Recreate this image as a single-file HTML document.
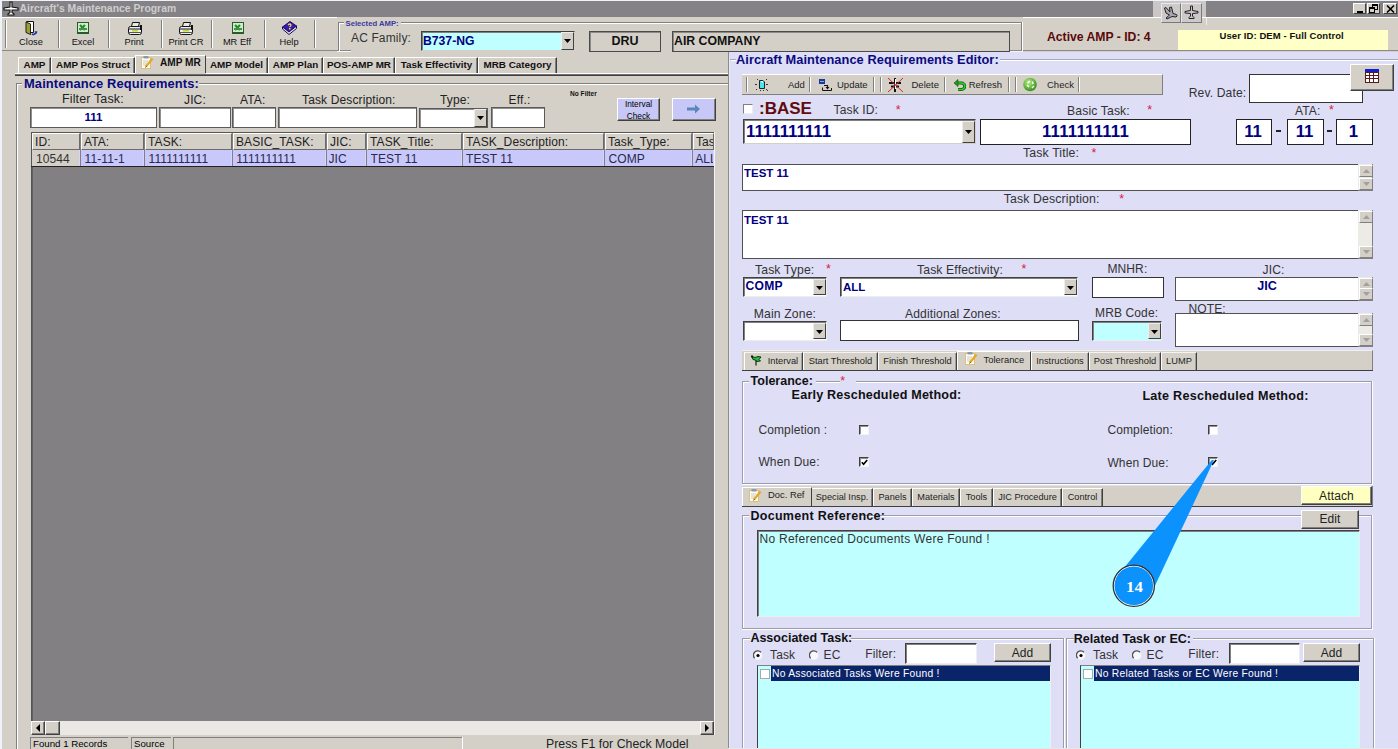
<!DOCTYPE html>
<html><head><meta charset="utf-8"><style>
html,body{margin:0;padding:0;}
body{width:1398px;height:749px;overflow:hidden;position:relative;background:#d4d0c8;font-family:"Liberation Sans",sans-serif;}
.a{position:absolute;}
.t{position:absolute;white-space:pre;line-height:1.149;}
</style></head><body>
<div class="a" style="left:0px;top:0px;width:1398px;height:749px;background:#d4d0c8"></div>
<div class="a" style="left:0px;top:0px;width:2px;height:749px;background:#eef3fb"></div>
<div class="a" style="left:0px;top:0px;width:1398px;height:1px;background:#eef3fb"></div>
<div class="a" style="left:2px;top:1px;width:1151px;height:16px;background:#848284"></div>
<div class="a" style="left:1206px;top:1px;width:192px;height:16px;background:#848284"></div>
<div class="t" style="left:19.5px;top:3.42px;font-size:10.4px;font-weight:bold;color:#cfcdcf;">Aircraft's Maintenance Program</div>
<svg class="a" style="left:3px;top:1px" width="16" height="15" viewBox="0 0 16 15"><path d="M7 1 H9 V6 L15 7 V9 L9 9 V11.5 L11 13 V14 H5 V13 L7 11.5 V9 L1 9 V7 L7 6Z" fill="#fff" stroke="#111" stroke-width="1.1"/></svg>
<div class="a" style="left:1353px;top:3px;width:13px;height:11px;background:#d4d0c8;box-sizing:border-box;border:1px solid;border-color:#fff #404040 #404040 #fff"></div>
<div class="a" style="left:1367px;top:3px;width:13px;height:11px;background:#d4d0c8;box-sizing:border-box;border:1px solid;border-color:#fff #404040 #404040 #fff"></div>
<div class="a" style="left:1383px;top:3px;width:14px;height:11px;background:#d4d0c8;box-sizing:border-box;border:1px solid;border-color:#fff #404040 #404040 #fff"></div>
<div class="a" style="left:1357px;top:11px;width:6px;height:2px;background:#000"></div>
<svg class="a" style="left:1369px;top:4px" width="10" height="9"><rect x="3.5" y="0.5" width="5" height="5" fill="none" stroke="#000"/><rect x="3" y="0" width="6" height="2" fill="#000"/><rect x="0.5" y="3.5" width="5" height="5" fill="#d4d0c8" stroke="#000"/><rect x="0" y="3" width="6" height="2" fill="#000"/></svg>
<svg class="a" style="left:1386px;top:5px" width="9" height="8"><path d="M1 0.5 L8 7.5 M8 0.5 L1 7.5" stroke="#000" stroke-width="1.6"/></svg>
<div class="a" style="left:1153px;top:1px;width:53px;height:16px;background:#cbc7c7"></div>
<div class="a" style="left:1206px;top:17px;width:1px;height:8px;background:#eeeeee"></div>
<div class="a" style="left:1161px;top:3px;width:20px;height:20px;background:#cdc9c9;box-sizing:border-box;border:1px solid;border-color:#e8e8e8 #7a7a7a #7a7a7a #e8e8e8"></div>
<div class="a" style="left:1181px;top:3px;width:21px;height:20px;background:#cdc9c9;box-sizing:border-box;border:1px solid;border-color:#e8e8e8 #7a7a7a #7a7a7a #e8e8e8"></div>
<svg class="a" style="left:1163px;top:6px" width="16" height="14"><path d="M1.5 2 L3 1.5 L7 6 L6.5 1.5 L8.5 1 L10 7.5 L13.5 8.5 Q15 10 13 11 L9 10.5 L4 13 L3 12 L6.5 9 L3 7Z" fill="#aaa6b0" stroke="#222" stroke-width="1"/></svg>
<svg class="a" style="left:1184px;top:5px" width="15" height="15"><path d="M6.5 1 H8.5 V5.5 L14 6.5 V8 L8.5 8.5 V11 L10 12.5 V13.5 H5 V12.5 L6.5 11 V8.5 L1 8 V6.5 L6.5 5.5Z" fill="#c8c4c8" stroke="#222" stroke-width="1"/></svg>
<div class="a" style="left:2px;top:17px;width:335px;height:1px;background:#fff"></div>
<div class="a" style="left:1023px;top:17px;width:130px;height:1px;background:#fff"></div>
<div class="a" style="left:1153px;top:17px;width:8px;height:1px;background:#fff"></div>
<div class="a" style="left:1202px;top:17px;width:196px;height:1px;background:#fff"></div>
<div class="a" style="left:2px;top:50px;width:349px;height:1px;background:#8a8a8a"></div>
<div class="a" style="left:337px;top:51px;width:14px;height:1px;background:#f6f6f6"></div>
<div class="a" style="left:1010px;top:50px;width:388px;height:1px;background:#8a8a8a"></div>
<div class="a" style="left:1010px;top:51px;width:13px;height:1px;background:#f6f6f6"></div>
<div class="a" style="left:5px;top:20px;width:1px;height:28px;background:#808080"></div>
<div class="a" style="left:6px;top:20px;width:1px;height:28px;background:#fff"></div>
<div class="a" style="left:58px;top:20px;width:1px;height:28px;background:#808080"></div>
<div class="a" style="left:59px;top:20px;width:1px;height:28px;background:#fff"></div>
<div class="a" style="left:108px;top:20px;width:1px;height:28px;background:#808080"></div>
<div class="a" style="left:109px;top:20px;width:1px;height:28px;background:#fff"></div>
<div class="a" style="left:161px;top:20px;width:1px;height:28px;background:#808080"></div>
<div class="a" style="left:162px;top:20px;width:1px;height:28px;background:#fff"></div>
<div class="a" style="left:211px;top:20px;width:1px;height:28px;background:#808080"></div>
<div class="a" style="left:212px;top:20px;width:1px;height:28px;background:#fff"></div>
<div class="a" style="left:264px;top:20px;width:1px;height:28px;background:#808080"></div>
<div class="a" style="left:265px;top:20px;width:1px;height:28px;background:#fff"></div>
<div class="a" style="left:314px;top:20px;width:1px;height:28px;background:#808080"></div>
<div class="a" style="left:315px;top:20px;width:1px;height:28px;background:#fff"></div>
<div class="t" style="left:-9px;top:37.13px;font-size:9.3px;color:#111;width:80px;text-align:center;">Close</div>
<div class="t" style="left:43px;top:37.13px;font-size:9.3px;color:#111;width:80px;text-align:center;">Excel</div>
<div class="t" style="left:94px;top:37.13px;font-size:9.3px;color:#111;width:80px;text-align:center;">Print</div>
<div class="t" style="left:146px;top:37.13px;font-size:9.3px;color:#111;width:80px;text-align:center;">Print CR</div>
<div class="t" style="left:197px;top:37.13px;font-size:9.3px;color:#111;width:80px;text-align:center;">MR Eff</div>
<div class="t" style="left:249px;top:37.13px;font-size:9.3px;color:#111;width:80px;text-align:center;">Help</div>
<svg class="a" style="left:25px;top:20px" width="14" height="17"><path d="M1.5 1.5 H8.5 V12.5 H1.5Z" fill="#fff" stroke="#111"/><path d="M1 2 L5.5 4 V14.5 L1 12.5Z" fill="#9aa02a" stroke="#222" stroke-width="1"/><path d="M7 14 Q9 15.5 11 12.5" stroke="#2030b0" stroke-width="1.6" fill="none"/><path d="M9.5 11 L12.5 11.5 L11.5 14Z" fill="#2030b0"/></svg>
<svg class="a" style="left:77px;top:22px" width="12" height="12"><rect x="0" y="0" width="12" height="12" fill="#2a5a2a"/><rect x="1" y="1" width="10" height="9" fill="#d0ecd0"/><path d="M3 3 L8 8 M8 3 L3 8" stroke="#2e8a2e" stroke-width="2.2"/><rect x="2" y="6" width="8" height="2" fill="#3a9a3a"/></svg>
<svg class="a" style="left:232px;top:22px" width="12" height="12"><rect x="0" y="0" width="12" height="12" fill="#2a5a2a"/><rect x="1" y="1" width="10" height="9" fill="#d0ecd0"/><path d="M3 3 L8 8 M8 3 L3 8" stroke="#2e8a2e" stroke-width="2.2"/><rect x="2" y="6" width="8" height="2" fill="#3a9a3a"/></svg>
<svg class="a" style="left:128px;top:22px" width="15" height="13"><path d="M4.5 0.5 H11.5 L10.5 4.5 H3.5Z" fill="#e8e8e8" stroke="#111"/><rect x="0.5" y="4.5" width="13" height="8" rx="2" fill="#f0f0f0" stroke="#111"/><rect x="1" y="6.5" width="12" height="1" fill="#111"/><rect x="4" y="8" width="6" height="1.5" fill="#b8d820"/><rect x="1" y="10" width="12" height="1" fill="#555"/><rect x="12" y="3" width="2" height="5" fill="#111"/></svg>
<svg class="a" style="left:179px;top:22px" width="15" height="13"><path d="M4.5 0.5 H11.5 L10.5 4.5 H3.5Z" fill="#e8e8e8" stroke="#111"/><rect x="0.5" y="4.5" width="13" height="8" rx="2" fill="#f0f0f0" stroke="#111"/><rect x="1" y="6.5" width="12" height="1" fill="#111"/><rect x="4" y="8" width="6" height="1.5" fill="#b8d820"/><rect x="1" y="10" width="12" height="1" fill="#555"/><rect x="12" y="3" width="2" height="5" fill="#111"/></svg>
<svg class="a" style="left:282px;top:21px" width="15" height="14"><path d="M0.5 6 L8 0.5 L14.5 5 L7 11Z" fill="#3a1ab0" stroke="#1a0a60"/><path d="M0.5 6 V8 L7 13.5 L14.5 7.5 V5 L7 11Z" fill="#e8e8f0" stroke="#1a0a60"/><path d="M6 4 Q8 2 9 4 Q9 5 7.5 6" stroke="#f0d840" stroke-width="1.3" fill="none"/><rect x="7" y="7" width="1.5" height="1.5" fill="#f0d840"/></svg>
<div class="a" style="left:338px;top:22px;width:6px;height:1px;background:#808080"></div>
<div class="a" style="left:338px;top:23px;width:6px;height:1px;background:#fff"></div>
<div class="a" style="left:401px;top:22px;width:621px;height:1px;background:#808080"></div>
<div class="a" style="left:401px;top:23px;width:621px;height:1px;background:#fff"></div>
<div class="a" style="left:338px;top:22px;width:1px;height:29px;background:#808080"></div>
<div class="a" style="left:339px;top:23px;width:1px;height:28px;background:#fff"></div>
<div class="a" style="left:1021px;top:22px;width:1px;height:29px;background:#808080"></div>
<div class="a" style="left:1022px;top:22px;width:1px;height:29px;background:#fff"></div>
<div class="t" style="left:345.5px;top:19.61px;font-size:7.7px;font-weight:bold;color:#3a3aa0;">Selected AMP:</div>
<div class="t" style="left:351px;top:31.75px;font-size:12px;color:#333;letter-spacing:0.13px;">AC Family:</div>
<div class="a" style="left:421px;top:31px;width:154px;height:20px;background:#c0ffff;box-sizing:border-box;border:1px solid;border-color:#404040 #d4d0c8 #d4d0c8 #404040;box-shadow:inset 1px 1px 0 #808080"></div>
<div class="a" style="left:561px;top:32px;width:13px;height:18px;background:#d4d0c8;box-sizing:border-box;border:1px solid;border-color:#eee #404040 #404040 #eee"></div>
<svg class="a" style="left:564px;top:39px" width="7" height="4"><path d="M0 0 H7 L3.5 4Z" fill="#000"/></svg>
<div class="t" style="left:423px;top:34.26px;font-size:12.2px;font-weight:bold;color:#000080;">B737-NG</div>
<div class="a" style="left:589px;top:31px;width:72px;height:21px;background:#d4d0c8;box-sizing:border-box;border:1px solid #4a4a4a;box-shadow:inset 1px 1px 0 #8a8a8a"></div>
<div class="t" style="left:589px;top:33.99px;font-size:12.5px;font-weight:bold;color:#111;width:72px;text-align:center;">DRU</div>
<div class="a" style="left:672px;top:31px;width:338px;height:21px;background:#d4d0c8;box-sizing:border-box;border:1px solid #4a4a4a;box-shadow:inset 1px 1px 0 #8a8a8a"></div>
<div class="t" style="left:674px;top:34.17px;font-size:12.3px;font-weight:bold;color:#111;">AIR COMPANY</div>
<div class="t" style="left:1047px;top:30.46px;font-size:12.2px;font-weight:bold;color:#5a0a0a;">Active AMP - ID: 4</div>
<div class="a" style="left:1178px;top:30px;width:210px;height:20px;background:#ffffc8"></div>
<div class="t" style="left:1219.5px;top:31.45px;font-size:9.5px;font-weight:bold;color:#111;letter-spacing:0.09px">User ID: DEM - Full Control</div>
<div class="a" style="left:18px;top:57px;width:33px;height:16px;background:#d4d0c8;box-sizing:border-box;border-top:1px solid #fff;border-left:1px solid #fff;border-right:1px solid #404040;box-shadow:inset -1px 0 0 #808080"></div>
<div class="t" style="left:18px;top:59.08px;font-size:9.9px;font-weight:bold;color:#111;width:33px;text-align:center;">AMP</div>
<div class="a" style="left:51px;top:57px;width:84px;height:16px;background:#d4d0c8;box-sizing:border-box;border-top:1px solid #fff;border-left:1px solid #fff;border-right:1px solid #404040;box-shadow:inset -1px 0 0 #808080"></div>
<div class="t" style="left:51px;top:59.08px;font-size:9.9px;font-weight:bold;color:#111;width:84px;text-align:center;">AMP Pos Struct</div>
<div class="a" style="left:205px;top:57px;width:63px;height:16px;background:#d4d0c8;box-sizing:border-box;border-top:1px solid #fff;border-left:1px solid #fff;border-right:1px solid #404040;box-shadow:inset -1px 0 0 #808080"></div>
<div class="t" style="left:205px;top:59.08px;font-size:9.9px;font-weight:bold;color:#111;width:63px;text-align:center;">AMP Model</div>
<div class="a" style="left:268px;top:57px;width:55px;height:16px;background:#d4d0c8;box-sizing:border-box;border-top:1px solid #fff;border-left:1px solid #fff;border-right:1px solid #404040;box-shadow:inset -1px 0 0 #808080"></div>
<div class="t" style="left:268px;top:59.08px;font-size:9.9px;font-weight:bold;color:#111;width:55px;text-align:center;">AMP Plan</div>
<div class="a" style="left:323px;top:57px;width:72px;height:16px;background:#d4d0c8;box-sizing:border-box;border-top:1px solid #fff;border-left:1px solid #fff;border-right:1px solid #404040;box-shadow:inset -1px 0 0 #808080"></div>
<div class="t" style="left:323px;top:59.08px;font-size:9.9px;font-weight:bold;color:#111;width:72px;text-align:center;">POS-AMP MR</div>
<div class="a" style="left:395px;top:57px;width:83px;height:16px;background:#d4d0c8;box-sizing:border-box;border-top:1px solid #fff;border-left:1px solid #fff;border-right:1px solid #404040;box-shadow:inset -1px 0 0 #808080"></div>
<div class="t" style="left:395px;top:59.08px;font-size:9.9px;font-weight:bold;color:#111;width:83px;text-align:center;">Task Effectivity</div>
<div class="a" style="left:478px;top:57px;width:79px;height:16px;background:#d4d0c8;box-sizing:border-box;border-top:1px solid #fff;border-left:1px solid #fff;border-right:1px solid #404040;box-shadow:inset -1px 0 0 #808080"></div>
<div class="t" style="left:478px;top:59.08px;font-size:9.9px;font-weight:bold;color:#111;width:79px;text-align:center;">MRB Category</div>
<div class="a" style="left:135px;top:55px;width:71px;height:18px;background:#d4d0c8;box-sizing:border-box;border-top:1px solid #fff;border-left:1px solid #fff;border-right:1px solid #404040"></div>
<div class="t" style="left:160px;top:57.00px;font-size:10.1px;font-weight:bold;color:#111;">AMP MR</div>
<svg class="a" style="left:141px;top:56px" width="13" height="13"><rect x="0.5" y="1.5" width="9" height="11" fill="#fffef0" stroke="#d8c080"/><rect x="2.5" y="0" width="5" height="2.5" fill="#8a9aa8"/><path d="M2 5h5M2 7h4M2 9h3" stroke="#c8c8c8"/><path d="M5 10.5 L11.5 2.5" stroke="#e8a828" stroke-width="2.4"/><path d="M4.5 11.5 L5.5 10" stroke="#604010" stroke-width="1"/></svg>
<div class="a" style="left:15px;top:73px;width:120px;height:1px;background:#fff"></div>
<div class="a" style="left:206px;top:73px;width:522px;height:1px;background:#fff"></div>
<div class="a" style="left:15px;top:74px;width:713px;height:1px;background:#707070"></div>
<div class="a" style="left:15px;top:75px;width:713px;height:1px;background:#404040"></div>
<div class="a" style="left:16px;top:83px;width:1px;height:666px;background:#808080"></div>
<div class="a" style="left:17px;top:84px;width:1px;height:665px;background:#fff"></div>
<div class="a" style="left:16px;top:83px;width:6px;height:1px;background:#808080"></div>
<div class="a" style="left:17px;top:84px;width:5px;height:1px;background:#fff"></div>
<div class="a" style="left:199px;top:83px;width:529px;height:1px;background:#808080"></div>
<div class="a" style="left:199px;top:84px;width:529px;height:1px;background:#fff"></div>
<div class="a" style="left:714px;top:132px;width:1px;height:603px;background:#f4f4f4"></div>
<div class="t" style="left:24px;top:77.12px;font-size:12.9px;font-weight:bold;color:#0a0a80;letter-spacing:0.12px">Maintenance Requirements:</div>
<div class="t" style="left:62px;top:91.79px;font-size:12.5px;color:#222;letter-spacing:0.13px;">Filter Task:</div>
<div class="t" style="left:184px;top:93.75px;font-size:12px;color:#222;letter-spacing:0.13px;">JIC:</div>
<div class="t" style="left:240px;top:93.75px;font-size:12px;color:#222;letter-spacing:0.13px;">ATA:</div>
<div class="t" style="left:302px;top:93.75px;font-size:12px;color:#222;letter-spacing:0.13px;">Task Description:</div>
<div class="t" style="left:440px;top:93.75px;font-size:12px;color:#222;letter-spacing:0.13px;">Type:</div>
<div class="t" style="left:508.6px;top:93.75px;font-size:12px;color:#222;letter-spacing:0.13px;">Eff.:</div>
<div class="t" style="left:570px;top:90.42px;font-size:6.6px;font-weight:bold;color:#111;">No Filter</div>
<div class="a" style="left:30px;top:107px;width:127px;height:21px;background:#fff;box-sizing:border-box;border:1px solid #5a5a5a;box-shadow:inset 1px 1px 0 #909090"></div>
<div class="t" style="left:30px;top:110.61px;font-size:11.5px;font-weight:bold;color:#000080;width:127px;text-align:center;">111</div>
<div class="a" style="left:159px;top:107px;width:72px;height:21px;background:#fff;box-sizing:border-box;border:1px solid #5a5a5a;box-shadow:inset 1px 1px 0 #909090"></div>
<div class="a" style="left:232px;top:107px;width:44px;height:21px;background:#fff;box-sizing:border-box;border:1px solid #5a5a5a;box-shadow:inset 1px 1px 0 #909090"></div>
<div class="a" style="left:278px;top:107px;width:139px;height:21px;background:#fff;box-sizing:border-box;border:1px solid #5a5a5a;box-shadow:inset 1px 1px 0 #909090"></div>
<div class="a" style="left:419px;top:108px;width:69px;height:20px;background:#fff;box-sizing:border-box;border:1px solid #5a5a5a;box-shadow:inset 1px 1px 0 #909090"></div>
<div class="a" style="left:474px;top:109px;width:13px;height:18px;background:#d4d0c8;box-sizing:border-box;border:1px solid;border-color:#eee #404040 #404040 #eee"></div>
<svg class="a" style="left:477px;top:116px" width="7" height="4"><path d="M0 0 H7 L3.5 4Z" fill="#000"/></svg>
<div class="a" style="left:491px;top:107px;width:54px;height:21px;background:#fff;box-sizing:border-box;border:1px solid #5a5a5a;box-shadow:inset 1px 1px 0 #909090"></div>
<div class="a" style="left:617px;top:98px;width:43px;height:23px;background:#c8c8f8;box-sizing:border-box;border:1px solid;border-color:#fff #404040 #404040 #fff;box-shadow:inset -1px -1px 0 #808080"></div>
<div class="t" style="left:617px;top:100.46px;font-size:8.3px;color:#000;width:43px;text-align:center;">Interval</div>
<div class="t" style="left:617px;top:112.36px;font-size:8.3px;color:#000;width:43px;text-align:center;">Check</div>
<div class="a" style="left:672px;top:98px;width:44px;height:23px;background:#c8c8f8;box-sizing:border-box;border:1px solid;border-color:#fff #404040 #404040 #fff;box-shadow:inset -1px -1px 0 #808080"></div>
<svg class="a" style="left:687px;top:104px" width="14" height="10"><path d="M0 3.5 H8 V0.5 L13 5 L8 9.5 V6.5 H0Z" fill="#5a86b8"/></svg>
<div class="a" style="left:31px;top:132px;width:683px;height:590px;background:#838083"></div>
<div class="a" style="left:31px;top:132px;width:683px;height:1px;background:#555"></div>
<div class="a" style="left:31px;top:132px;width:1px;height:603px;background:#555"></div>
<div class="a" style="left:32px;top:166px;width:1px;height:555px;background:#606060"></div>
<div class="a" style="left:32px;top:133px;width:48px;height:17px;background:#d4d0c8;box-sizing:border-box;border:1px solid;border-color:#fff #6a6a6a #6a6a6a #fff"></div>
<div class="a" style="left:32px;top:150px;width:48px;height:16px;background:#d4d0c8;box-sizing:border-box;border-right:1px solid #d4d4fc;"></div>
<div class="t" style="left:35px;top:136.15px;font-size:12px;color:#222;width:44px;overflow:hidden;letter-spacing:0.1px;">ID:</div>
<div class="t" style="left:36px;top:152.95px;font-size:12px;color:#333;width:43px;overflow:hidden;letter-spacing:0.1px;">10544</div>
<div class="a" style="left:81px;top:133px;width:63px;height:17px;background:#d4d0c8;box-sizing:border-box;border:1px solid;border-color:#fff #6a6a6a #6a6a6a #fff"></div>
<div class="a" style="left:81px;top:150px;width:63px;height:16px;background:#c8c8fa;box-sizing:border-box;border-right:1px solid #d4d4fc;"></div>
<div class="t" style="left:84px;top:136.15px;font-size:12px;color:#222;width:59px;overflow:hidden;letter-spacing:0.1px;">ATA:</div>
<div class="t" style="left:84.5px;top:152.95px;font-size:12px;color:#282850;width:58.5px;overflow:hidden;letter-spacing:0.1px;">11-11-1</div>
<div class="a" style="left:145px;top:133px;width:87px;height:17px;background:#d4d0c8;box-sizing:border-box;border:1px solid;border-color:#fff #6a6a6a #6a6a6a #fff"></div>
<div class="a" style="left:145px;top:150px;width:87px;height:16px;background:#c8c8fa;box-sizing:border-box;border-right:1px solid #d4d4fc;"></div>
<div class="t" style="left:148px;top:136.15px;font-size:12px;color:#222;width:83px;overflow:hidden;letter-spacing:0.1px;">TASK:</div>
<div class="t" style="left:148.5px;top:152.95px;font-size:12px;color:#282850;width:82.5px;overflow:hidden;letter-spacing:0.1px;">1111111111</div>
<div class="a" style="left:233px;top:133px;width:93px;height:17px;background:#d4d0c8;box-sizing:border-box;border:1px solid;border-color:#fff #6a6a6a #6a6a6a #fff"></div>
<div class="a" style="left:233px;top:150px;width:93px;height:16px;background:#c8c8fa;box-sizing:border-box;border-right:1px solid #d4d4fc;"></div>
<div class="t" style="left:236px;top:136.15px;font-size:12px;color:#222;width:89px;overflow:hidden;letter-spacing:0.1px;">BASIC_TASK:</div>
<div class="t" style="left:236.2px;top:152.95px;font-size:12px;color:#282850;width:88.8px;overflow:hidden;letter-spacing:0.1px;">1111111111</div>
<div class="a" style="left:327px;top:133px;width:39px;height:17px;background:#d4d0c8;box-sizing:border-box;border:1px solid;border-color:#fff #6a6a6a #6a6a6a #fff"></div>
<div class="a" style="left:327px;top:150px;width:39px;height:16px;background:#c8c8fa;box-sizing:border-box;border-right:1px solid #d4d4fc;"></div>
<div class="t" style="left:330px;top:136.15px;font-size:12px;color:#222;width:35px;overflow:hidden;letter-spacing:0.1px;">JIC:</div>
<div class="t" style="left:328.5px;top:152.95px;font-size:12px;color:#282850;width:36.5px;overflow:hidden;letter-spacing:0.1px;">JIC</div>
<div class="a" style="left:367px;top:133px;width:95px;height:17px;background:#d4d0c8;box-sizing:border-box;border:1px solid;border-color:#fff #6a6a6a #6a6a6a #fff"></div>
<div class="a" style="left:367px;top:150px;width:95px;height:16px;background:#c8c8fa;box-sizing:border-box;border-right:1px solid #d4d4fc;"></div>
<div class="t" style="left:370px;top:136.15px;font-size:12px;color:#222;width:91px;overflow:hidden;letter-spacing:0.1px;">TASK_Title:</div>
<div class="t" style="left:370.5px;top:152.95px;font-size:12px;color:#282850;width:90.5px;overflow:hidden;letter-spacing:0.1px;">TEST 11</div>
<div class="a" style="left:463px;top:133px;width:141px;height:17px;background:#d4d0c8;box-sizing:border-box;border:1px solid;border-color:#fff #6a6a6a #6a6a6a #fff"></div>
<div class="a" style="left:463px;top:150px;width:141px;height:16px;background:#c8c8fa;box-sizing:border-box;border-right:1px solid #d4d4fc;"></div>
<div class="t" style="left:466px;top:136.15px;font-size:12px;color:#222;width:137px;overflow:hidden;letter-spacing:0.1px;">TASK_Description:</div>
<div class="t" style="left:466px;top:152.95px;font-size:12px;color:#282850;width:137px;overflow:hidden;letter-spacing:0.1px;">TEST 11</div>
<div class="a" style="left:605px;top:133px;width:87px;height:17px;background:#d4d0c8;box-sizing:border-box;border:1px solid;border-color:#fff #6a6a6a #6a6a6a #fff"></div>
<div class="a" style="left:605px;top:150px;width:87px;height:16px;background:#c8c8fa;box-sizing:border-box;border-right:1px solid #d4d4fc;"></div>
<div class="t" style="left:608px;top:136.15px;font-size:12px;color:#222;width:83px;overflow:hidden;letter-spacing:0.1px;">Task_Type:</div>
<div class="t" style="left:608.5px;top:152.95px;font-size:12px;color:#282850;width:82.5px;overflow:hidden;letter-spacing:0.1px;">COMP</div>
<div class="a" style="left:693px;top:133px;width:21px;height:17px;background:#d4d0c8;box-sizing:border-box;border:1px solid;border-color:#fff #6a6a6a #6a6a6a #fff"></div>
<div class="a" style="left:693px;top:150px;width:21px;height:16px;background:#c8c8fa;box-sizing:border-box;border-right:1px solid #d4d4fc;"></div>
<div class="t" style="left:696px;top:136.15px;font-size:12px;color:#222;width:17px;overflow:hidden;letter-spacing:0.1px;">Task_Effectivity:</div>
<div class="t" style="left:695.2px;top:152.95px;font-size:12px;color:#282850;width:17.8px;overflow:hidden;letter-spacing:0.1px;">ALL</div>
<div class="a" style="left:31px;top:166px;width:683px;height:1px;background:#222"></div>
<div class="a" style="left:31px;top:721px;width:683px;height:14px;background:#eae8e4"></div>
<div class="a" style="left:31px;top:721px;width:14px;height:14px;background:#d4d0c8;box-sizing:border-box;border:1px solid;border-color:#fff #404040 #404040 #fff;box-shadow:inset -1px -1px 0 #808080"></div>
<div class="a" style="left:700px;top:721px;width:14px;height:14px;background:#d4d0c8;box-sizing:border-box;border:1px solid;border-color:#fff #404040 #404040 #fff;box-shadow:inset -1px -1px 0 #808080"></div>
<svg class="a" style="left:36px;top:724px" width="4" height="8"><path d="M4 0 V8 L0 4Z" fill="#000"/></svg>
<svg class="a" style="left:705px;top:724px" width="4" height="8"><path d="M0 0 V8 L4 4Z" fill="#000"/></svg>
<div class="a" style="left:45px;top:721px;width:15px;height:14px;background:#d4d0c8;box-sizing:border-box;border:1px solid;border-color:#fff #404040 #404040 #fff;box-shadow:inset -1px -1px 0 #808080"></div>
<div class="a" style="left:30px;top:737px;width:1px;height:12px;background:#808080"></div>
<div class="a" style="left:30px;top:737px;width:98px;height:1px;background:#808080"></div>
<div class="a" style="left:131px;top:737px;width:1px;height:12px;background:#808080"></div>
<div class="a" style="left:131px;top:737px;width:40px;height:1px;background:#808080"></div>
<div class="a" style="left:173px;top:737px;width:1px;height:12px;background:#808080"></div>
<div class="a" style="left:173px;top:737px;width:290px;height:1px;background:#808080"></div>
<div class="a" style="left:462px;top:737px;width:1px;height:12px;background:#fff"></div>
<div class="t" style="left:33px;top:738.07px;font-size:9.7px;color:#000;">Found 1 Records</div>
<div class="t" style="left:134px;top:738.47px;font-size:9.7px;color:#000;">Source</div>
<div class="t" style="left:546px;top:737.07px;font-size:12.3px;color:#222;letter-spacing:0.02px">Press F1 for Check Model</div>
<div class="a" style="left:728px;top:52px;width:670px;height:697px;background:#dedef6"></div>
<div class="a" style="left:729px;top:59px;width:7px;height:1px;background:#a8a8b8"></div>
<div class="a" style="left:1000px;top:59px;width:398px;height:1px;background:#a8a8b8"></div>
<div class="a" style="left:731px;top:60px;width:5px;height:1px;background:#fff"></div>
<div class="a" style="left:1000px;top:60px;width:398px;height:1px;background:#fff"></div>
<div class="a" style="left:728px;top:52px;width:1px;height:697px;background:#8c8c8c"></div>
<div class="a" style="left:729px;top:59px;width:1px;height:690px;background:#eaeaf2"></div>
<div class="t" style="left:736px;top:52.51px;font-size:12.8px;font-weight:bold;color:#0a0a80;letter-spacing:0.06px">Aircraft Maintenance Requirements Editor:</div>
<div class="a" style="left:742px;top:74px;width:421px;height:21px;background:#d4d0c8;box-sizing:border-box;border-bottom:1px solid #808080;border-right:1px solid #808080;border-top:1px solid #fff"></div>
<div class="a" style="left:746px;top:77px;width:1px;height:15px;background:#808080"></div>
<div class="a" style="left:747px;top:77px;width:1px;height:15px;background:#fff"></div>
<div class="a" style="left:809px;top:77px;width:1px;height:15px;background:#808080"></div>
<div class="a" style="left:810px;top:77px;width:1px;height:15px;background:#fff"></div>
<div class="a" style="left:873px;top:77px;width:1px;height:15px;background:#808080"></div>
<div class="a" style="left:874px;top:77px;width:1px;height:15px;background:#fff"></div>
<div class="a" style="left:880px;top:77px;width:1px;height:15px;background:#808080"></div>
<div class="a" style="left:881px;top:77px;width:1px;height:15px;background:#fff"></div>
<div class="a" style="left:944px;top:77px;width:1px;height:15px;background:#808080"></div>
<div class="a" style="left:945px;top:77px;width:1px;height:15px;background:#fff"></div>
<div class="a" style="left:1008px;top:77px;width:1px;height:15px;background:#808080"></div>
<div class="a" style="left:1009px;top:77px;width:1px;height:15px;background:#fff"></div>
<div class="a" style="left:1015px;top:77px;width:1px;height:15px;background:#808080"></div>
<div class="a" style="left:1016px;top:77px;width:1px;height:15px;background:#fff"></div>
<div class="a" style="left:1078px;top:77px;width:1px;height:15px;background:#808080"></div>
<div class="a" style="left:1079px;top:77px;width:1px;height:15px;background:#fff"></div>
<div class="t" style="left:788px;top:80.05px;font-size:9.5px;color:#222;">Add</div>
<div class="t" style="left:837px;top:80.05px;font-size:9.5px;color:#222;">Update</div>
<div class="t" style="left:911.5px;top:80.05px;font-size:9.5px;color:#222;">Delete</div>
<div class="t" style="left:968.7px;top:80.05px;font-size:9.5px;color:#222;">Refresh</div>
<div class="t" style="left:1047px;top:80.05px;font-size:9.5px;color:#222;">Check</div>
<svg class="a" style="left:755px;top:79px" width="13" height="12"><path d="M4.5 1.5 H8 L9.5 3 V9.5 H4.5Z" fill="#40e8f0" stroke="#222"/><path d="M6 2.5 H7.5 V4" stroke="#fff" fill="none"/><g fill="#333"><rect x="2" y="0" width="1" height="1"/><rect x="11" y="0" width="1" height="1"/><rect x="0" y="5" width="2" height="1"/><rect x="11" y="5" width="2" height="1"/><rect x="1" y="10" width="1" height="1"/><rect x="5" y="11" width="1" height="1"/><rect x="8" y="11" width="1" height="1"/><rect x="11" y="10" width="1" height="1"/><rect x="12" y="11" width="1" height="1"/></g></svg>
<svg class="a" style="left:819px;top:79px" width="13" height="12"><rect x="0" y="0" width="6" height="5" fill="#1a3a9a"/><rect x="1" y="2" width="4" height="1" fill="#8ad"/><path d="M5 6.5 H8.5 V9" stroke="#111" stroke-width="1.2" fill="none"/><path d="M6.5 8 L8.5 10.5 L10.5 8Z" fill="#111"/><path d="M3.5 8.5 V11.5 H12.5 V9" stroke="#111" fill="none"/></svg>
<svg class="a" style="left:886px;top:76px" width="20" height="18"><path d="M9 2 V15 M3 7 H15 M5 10.5 H13 M8 15 H10" stroke="#111" stroke-width="2"/><path d="M9.5 3 V13" stroke="#fff" stroke-width="1"/><path d="M2 2 L17 16 M17 2 L2 16" stroke="#d02828" stroke-width="1"/></svg>
<svg class="a" style="left:954px;top:79px" width="12" height="12"><path d="M3 4 H7.5 A3.2 3.2 0 0 1 7.5 10.5 H4" fill="none" stroke="#0a5a0a" stroke-width="3"/><path d="M3 4 H7.5 A3.2 3.2 0 0 1 7.5 10.5 H4" fill="none" stroke="#30d030" stroke-width="1.5"/><path d="M0 4 L4 0.5 V7.5Z" fill="#20a020" stroke="#0a4a0a" stroke-width="0.6"/></svg>
<svg class="a" style="left:1023px;top:77px" width="14" height="15"><defs><radialGradient id="gg" cx="0.4" cy="0.35" r="0.7"><stop offset="0" stop-color="#b8f080"/><stop offset="1" stop-color="#2a8a1a"/></radialGradient></defs><circle cx="7" cy="7.5" r="6.8" fill="url(#gg)"/><path d="M4 8 L6 10 M4.5 6 L7 4 M9 11 L11 9 M9.5 4.5 L10 7" stroke="#fff" stroke-width="1.4"/></svg>
<div class="t" style="left:1188.7px;top:86.66px;font-size:12.1px;color:#333;letter-spacing:0.13px;">Rev. Date:</div>
<div class="a" style="left:1249px;top:74px;width:114px;height:29px;background:#fff;box-sizing:border-box;border:1px solid #333"></div>
<div class="a" style="left:1350px;top:64px;width:44px;height:27px;background:#d4d0c8;box-sizing:border-box;border:1px solid;border-color:#fff #404040 #404040 #fff;box-shadow:inset -1px -1px 0 #808080"></div>
<svg class="a" style="left:1365px;top:69px" width="14" height="14"><rect x="0" y="0" width="14" height="14" fill="#5a1a1a"/><rect x="0" y="0" width="14" height="3" fill="#1020d0"/><g fill="#fff"><rect x="1" y="4" width="3" height="2"/><rect x="5" y="4" width="3" height="2"/><rect x="9" y="4" width="4" height="2"/><rect x="1" y="7" width="3" height="2"/><rect x="5" y="7" width="3" height="2"/><rect x="9" y="7" width="4" height="2"/><rect x="1" y="10" width="3" height="3"/><rect x="5" y="10" width="3" height="3"/><rect x="9" y="10" width="4" height="3"/></g></svg>
<div class="a" style="left:743px;top:104px;width:10px;height:10px;background:#fff;box-sizing:border-box;border:1px solid;border-color:#808080 #eee #eee #808080"></div>
<div class="t" style="left:759px;top:99.34px;font-size:17px;font-weight:bold;color:#600c0c;">:BASE</div>
<div class="t" style="left:833.6px;top:104.05px;font-size:12px;color:#333;letter-spacing:0.13px;">Task ID:</div>
<div class="t" style="left:895.8000000000001px;top:103.29px;font-size:12.5px;color:#d82038;letter-spacing:0.13px;">*</div>
<div class="t" style="left:1067px;top:103.86px;font-size:12.2px;color:#333;letter-spacing:0.13px;">Basic Task:</div>
<div class="t" style="left:1147.2px;top:103.09px;font-size:12.5px;color:#d82038;letter-spacing:0.13px;">*</div>
<div class="t" style="left:1295px;top:105.35px;font-size:12px;color:#333;letter-spacing:0.13px;">ATA:</div>
<div class="t" style="left:1329.0px;top:103.49px;font-size:12.5px;color:#d82038;letter-spacing:0.13px;">*</div>
<div class="a" style="left:743px;top:119px;width:233px;height:25px;background:#fff;box-sizing:border-box;border:1px solid;border-color:#404040 #d4d0c8 #d4d0c8 #404040;box-shadow:inset 1px 1px 0 #808080"></div>
<div class="a" style="left:962px;top:121px;width:13px;height:22px;background:#d4d0c8;box-sizing:border-box;border:1px solid;border-color:#eee #404040 #404040 #eee"></div>
<svg class="a" style="left:965px;top:130px" width="7" height="4"><path d="M0 0 H7 L3.5 4Z" fill="#000"/></svg>
<div class="t" style="left:746px;top:121.63px;font-size:16.8px;font-weight:bold;color:#000080;">1111111111</div>
<div class="a" style="left:980px;top:119px;width:211px;height:26px;background:#fff;box-sizing:border-box;border:1px solid #222"></div>
<div class="t" style="left:980px;top:121.63px;font-size:16.8px;font-weight:bold;color:#000080;width:211px;text-align:center;letter-spacing:0.2px">1111111111</div>
<div class="a" style="left:1236px;top:119px;width:36px;height:26px;background:#fff;box-sizing:border-box;border:1px solid #222"></div>
<div class="t" style="left:1235px;top:121.63px;font-size:16.8px;font-weight:bold;color:#000080;width:36px;text-align:center;">11</div>
<div class="a" style="left:1287px;top:119px;width:37px;height:26px;background:#fff;box-sizing:border-box;border:1px solid #222"></div>
<div class="t" style="left:1286px;top:121.63px;font-size:16.8px;font-weight:bold;color:#000080;width:37px;text-align:center;">11</div>
<div class="a" style="left:1336px;top:119px;width:37px;height:26px;background:#fff;box-sizing:border-box;border:1px solid #222"></div>
<div class="t" style="left:1335px;top:121.63px;font-size:16.8px;font-weight:bold;color:#000080;width:37px;text-align:center;">1</div>
<div class="a" style="left:1276px;top:130px;width:5px;height:2px;background:#222"></div>
<div class="a" style="left:1327px;top:130px;width:5px;height:2px;background:#222"></div>
<div class="t" style="left:1023px;top:146.27px;font-size:12.3px;color:#333;letter-spacing:0.13px;">Task Title:</div>
<div class="t" style="left:1091.4px;top:146.39px;font-size:12.5px;color:#d82038;letter-spacing:0.13px;">*</div>
<div class="a" style="left:742px;top:164px;width:617px;height:27px;background:#fff;box-sizing:border-box;border:1px solid;border-color:#505050 #505050 #505050 #505050"></div>
<div class="a" style="left:1358px;top:164px;width:15px;height:27px;background:#ecebe6;box-sizing:border-box;border-right:1px solid #808080;border-bottom:1px solid #808080"></div>
<div class="a" style="left:1359px;top:165px;width:14px;height:12px;background:#d4d0c8;box-sizing:border-box;border:1px solid;border-color:#fff #808080 #808080 #fff"></div>
<svg class="a" style="left:1363px;top:169px" width="7" height="4"><path d="M0 4 H7 L3.5 0Z" fill="#a0a0a0"/></svg>
<div class="a" style="left:1359px;top:178px;width:14px;height:12px;background:#d4d0c8;box-sizing:border-box;border:1px solid;border-color:#fff #808080 #808080 #fff"></div>
<svg class="a" style="left:1363px;top:182px" width="7" height="4"><path d="M0 0 H7 L3.5 4Z" fill="#a0a0a0"/></svg>
<div class="t" style="left:744px;top:167.31px;font-size:11.5px;font-weight:bold;color:#000080;">TEST 11</div>
<div class="t" style="left:1003.7px;top:192.27px;font-size:12.3px;color:#333;letter-spacing:0.13px;">Task Description:</div>
<div class="t" style="left:1119.2px;top:192.09px;font-size:12.5px;color:#d82038;letter-spacing:0.13px;">*</div>
<div class="a" style="left:742px;top:210px;width:617px;height:49px;background:#fff;box-sizing:border-box;border:1px solid;border-color:#505050 #505050 #505050 #505050"></div>
<div class="a" style="left:1358px;top:210px;width:15px;height:49px;background:#ecebe6;box-sizing:border-box;border-right:1px solid #808080;border-bottom:1px solid #808080"></div>
<div class="a" style="left:1359px;top:211px;width:14px;height:12px;background:#d4d0c8;box-sizing:border-box;border:1px solid;border-color:#fff #808080 #808080 #fff"></div>
<svg class="a" style="left:1363px;top:215px" width="7" height="4"><path d="M0 4 H7 L3.5 0Z" fill="#a0a0a0"/></svg>
<div class="a" style="left:1359px;top:246px;width:14px;height:12px;background:#d4d0c8;box-sizing:border-box;border:1px solid;border-color:#fff #808080 #808080 #fff"></div>
<svg class="a" style="left:1363px;top:250px" width="7" height="4"><path d="M0 0 H7 L3.5 4Z" fill="#a0a0a0"/></svg>
<div class="t" style="left:744px;top:213.71px;font-size:11.5px;font-weight:bold;color:#000080;">TEST 11</div>
<div class="t" style="left:755px;top:262.86px;font-size:12.2px;color:#333;letter-spacing:0.13px;">Task Type:</div>
<div class="t" style="left:826.0px;top:262.09px;font-size:12.5px;color:#d82038;letter-spacing:0.13px;">*</div>
<div class="a" style="left:743px;top:277px;width:84px;height:20px;background:#fff;box-sizing:border-box;border:1px solid;border-color:#404040 #eee #eee #404040;box-shadow:inset 1px 1px 0 #808080"></div>
<div class="a" style="left:813px;top:279px;width:13px;height:16px;background:#d4d0c8;box-sizing:border-box;border:1px solid;border-color:#eee #404040 #404040 #eee"></div>
<svg class="a" style="left:816px;top:286px" width="7" height="4"><path d="M0 0 H7 L3.5 4Z" fill="#000"/></svg>
<div class="t" style="left:745.4px;top:280.26px;font-size:12.1px;font-weight:bold;color:#000080;letter-spacing:0.3px">COMP</div>
<div class="t" style="left:917px;top:262.56px;font-size:12.2px;color:#333;letter-spacing:0.13px;">Task Effectivity:</div>
<div class="t" style="left:1021.6px;top:262.49px;font-size:12.5px;color:#d82038;letter-spacing:0.13px;">*</div>
<div class="a" style="left:840px;top:277px;width:238px;height:20px;background:#fff;box-sizing:border-box;border:1px solid;border-color:#404040 #eee #eee #404040;box-shadow:inset 1px 1px 0 #808080"></div>
<div class="a" style="left:1064px;top:279px;width:13px;height:16px;background:#d4d0c8;box-sizing:border-box;border:1px solid;border-color:#eee #404040 #404040 #eee"></div>
<svg class="a" style="left:1067px;top:286px" width="7" height="4"><path d="M0 0 H7 L3.5 4Z" fill="#000"/></svg>
<div class="t" style="left:843px;top:280.81px;font-size:11.5px;font-weight:bold;color:#000080;">ALL</div>
<div class="t" style="left:1107.4px;top:263.25px;font-size:12px;color:#333;letter-spacing:0.13px;">MNHR:</div>
<div class="a" style="left:1092px;top:277px;width:72px;height:21px;background:#fff;box-sizing:border-box;border:1px solid #333"></div>
<div class="t" style="left:1262.6px;top:264.15px;font-size:12px;color:#333;letter-spacing:0.13px;">JIC:</div>
<div class="a" style="left:1175px;top:277px;width:184px;height:24px;background:#fff;box-sizing:border-box;border:1px solid;border-color:#505050 #505050 #505050 #505050"></div>
<div class="a" style="left:1358px;top:277px;width:15px;height:24px;background:#ecebe6;box-sizing:border-box;border-right:1px solid #808080;border-bottom:1px solid #808080"></div>
<div class="a" style="left:1359px;top:278px;width:14px;height:12px;background:#d4d0c8;box-sizing:border-box;border:1px solid;border-color:#fff #808080 #808080 #fff"></div>
<svg class="a" style="left:1363px;top:282px" width="7" height="4"><path d="M0 4 H7 L3.5 0Z" fill="#a0a0a0"/></svg>
<div class="a" style="left:1359px;top:288px;width:14px;height:12px;background:#d4d0c8;box-sizing:border-box;border:1px solid;border-color:#fff #808080 #808080 #fff"></div>
<svg class="a" style="left:1363px;top:292px" width="7" height="4"><path d="M0 0 H7 L3.5 4Z" fill="#a0a0a0"/></svg>
<div class="t" style="left:1175px;top:278.80px;font-size:12.6px;font-weight:bold;color:#000080;width:184px;text-align:center;">JIC</div>
<div class="t" style="left:1188.5px;top:302.95px;font-size:12px;color:#333;letter-spacing:0.13px;">NOTE:</div>
<div class="a" style="left:1175px;top:313px;width:184px;height:34px;background:#fff;box-sizing:border-box;border:1px solid;border-color:#505050 #505050 #505050 #505050"></div>
<div class="a" style="left:1358px;top:313px;width:15px;height:34px;background:#ecebe6;box-sizing:border-box;border-right:1px solid #808080;border-bottom:1px solid #808080"></div>
<div class="a" style="left:1359px;top:314px;width:14px;height:12px;background:#d4d0c8;box-sizing:border-box;border:1px solid;border-color:#fff #808080 #808080 #fff"></div>
<svg class="a" style="left:1363px;top:318px" width="7" height="4"><path d="M0 4 H7 L3.5 0Z" fill="#a0a0a0"/></svg>
<div class="a" style="left:1359px;top:334px;width:14px;height:12px;background:#d4d0c8;box-sizing:border-box;border:1px solid;border-color:#fff #808080 #808080 #fff"></div>
<svg class="a" style="left:1363px;top:338px" width="7" height="4"><path d="M0 0 H7 L3.5 4Z" fill="#a0a0a0"/></svg>
<div class="t" style="left:753.8px;top:306.56px;font-size:12.2px;color:#333;letter-spacing:0.13px;">Main Zone:</div>
<div class="a" style="left:743px;top:321px;width:84px;height:20px;background:#fff;box-sizing:border-box;border:1px solid;border-color:#404040 #eee #eee #404040;box-shadow:inset 1px 1px 0 #808080"></div>
<div class="a" style="left:813px;top:323px;width:13px;height:16px;background:#d4d0c8;box-sizing:border-box;border:1px solid;border-color:#eee #404040 #404040 #eee"></div>
<svg class="a" style="left:816px;top:330px" width="7" height="4"><path d="M0 0 H7 L3.5 4Z" fill="#000"/></svg>
<div class="t" style="left:905px;top:307.66px;font-size:12.1px;color:#333;letter-spacing:0.13px;">Additional Zones:</div>
<div class="a" style="left:840px;top:320px;width:239px;height:21px;background:#fff;box-sizing:border-box;border:1px solid #333"></div>
<div class="t" style="left:1095px;top:307.45px;font-size:12px;color:#333;letter-spacing:0.13px;">MRB Code:</div>
<div class="a" style="left:1092px;top:321px;width:70px;height:20px;background:#c0ffff;box-sizing:border-box;border:1px solid;border-color:#404040 #eee #eee #404040;box-shadow:inset 1px 1px 0 #808080"></div>
<div class="a" style="left:1148px;top:323px;width:13px;height:16px;background:#d4d0c8;box-sizing:border-box;border:1px solid;border-color:#eee #404040 #404040 #eee"></div>
<svg class="a" style="left:1151px;top:330px" width="7" height="4"><path d="M0 0 H7 L3.5 4Z" fill="#000"/></svg>
<div class="a" style="left:742px;top:350px;width:631px;height:21px;background:#d4d0c8;box-sizing:border-box;border-top:1px solid #f0f0f0;border-bottom:1px solid #404040;border-right:1px solid #808080"></div>
<div class="a" style="left:742px;top:370px;width:631px;height:1px;background:#404040"></div>
<div class="a" style="left:744px;top:352px;width:59px;height:18px;background:#d4d0c8;box-sizing:border-box;border-top:1px solid #f4f4f4;border-left:1px solid #fff;border-right:1px solid #404040;box-shadow:inset -1px 0 0 #a0a0a0"></div>
<div class="t" style="left:767.7px;top:356.23px;font-size:9.3px;color:#222;">Interval</div>
<div class="a" style="left:803px;top:352px;width:75px;height:18px;background:#d4d0c8;box-sizing:border-box;border-top:1px solid #f4f4f4;border-left:1px solid #fff;border-right:1px solid #404040;box-shadow:inset -1px 0 0 #a0a0a0"></div>
<div class="t" style="left:803px;top:356.23px;font-size:9.3px;color:#222;width:75px;text-align:center;">Start Threshold</div>
<div class="a" style="left:878px;top:352px;width:79px;height:18px;background:#d4d0c8;box-sizing:border-box;border-top:1px solid #f4f4f4;border-left:1px solid #fff;border-right:1px solid #404040;box-shadow:inset -1px 0 0 #a0a0a0"></div>
<div class="t" style="left:878px;top:356.23px;font-size:9.3px;color:#222;width:79px;text-align:center;">Finish Threshold</div>
<div class="a" style="left:1031px;top:352px;width:58px;height:18px;background:#d4d0c8;box-sizing:border-box;border-top:1px solid #f4f4f4;border-left:1px solid #fff;border-right:1px solid #404040;box-shadow:inset -1px 0 0 #a0a0a0"></div>
<div class="t" style="left:1031px;top:356.23px;font-size:9.3px;color:#222;width:58px;text-align:center;">Instructions</div>
<div class="a" style="left:1089px;top:352px;width:72px;height:18px;background:#d4d0c8;box-sizing:border-box;border-top:1px solid #f4f4f4;border-left:1px solid #fff;border-right:1px solid #404040;box-shadow:inset -1px 0 0 #a0a0a0"></div>
<div class="t" style="left:1089px;top:356.23px;font-size:9.3px;color:#222;width:72px;text-align:center;">Post Threshold</div>
<div class="a" style="left:1161px;top:352px;width:36px;height:18px;background:#d4d0c8;box-sizing:border-box;border-top:1px solid #f4f4f4;border-left:1px solid #fff;border-right:1px solid #404040;box-shadow:inset -1px 0 0 #a0a0a0"></div>
<div class="t" style="left:1161px;top:356.23px;font-size:9.3px;color:#222;width:36px;text-align:center;">LUMP</div>
<div class="a" style="left:957px;top:351px;width:74px;height:19px;background:#d4d0c8;box-sizing:border-box;border-top:1px solid #fff;border-left:1px solid #fff;border-right:1px solid #404040"></div>
<div class="t" style="left:983.6px;top:354.74px;font-size:9.4px;color:#222;">Tolerance</div>
<svg class="a" style="left:751px;top:355px" width="11" height="11"><path d="M1 1.5 L4 2.5 L7 1.5 L10 2 L8 4.5 L9.5 6 L5.5 6.5 L4.5 5 L2 4.5Z" fill="#20c040" stroke="#0a3a0a" stroke-width="1"/><path d="M5 5 V10.5" stroke="#333" stroke-width="1.4"/><rect x="0" y="0.5" width="2" height="2" fill="#111"/></svg>
<svg class="a" style="left:965px;top:352px" width="13" height="13"><rect x="0.5" y="1.5" width="9" height="11" fill="#fffef0" stroke="#d8c080"/><rect x="2.5" y="0" width="5" height="2.5" fill="#8a9aa8"/><path d="M2 5h5M2 7h4M2 9h3" stroke="#c8c8c8"/><path d="M5 10.5 L11.5 2.5" stroke="#e8a828" stroke-width="2.4"/><path d="M4.5 11.5 L5.5 10" stroke="#604010" stroke-width="1"/></svg>
<div class="a" style="left:742px;top:381px;width:7px;height:1px;background:#9c9ca6"></div>
<div class="a" style="left:742px;top:382px;width:7px;height:1px;background:#fff"></div>
<div class="a" style="left:816px;top:381px;width:24px;height:1px;background:#9c9ca6"></div>
<div class="a" style="left:816px;top:382px;width:24px;height:1px;background:#fff"></div>
<div class="a" style="left:856px;top:381px;width:516px;height:1px;background:#9c9ca6"></div>
<div class="a" style="left:856px;top:382px;width:516px;height:1px;background:#fff"></div>
<div class="a" style="left:742px;top:381px;width:1px;height:103px;background:#9c9ca6"></div>
<div class="a" style="left:1371px;top:381px;width:1px;height:103px;background:#9c9ca6"></div>
<div class="a" style="left:743px;top:382px;width:1px;height:101px;background:#fff"></div>
<div class="a" style="left:1372px;top:381px;width:1px;height:104px;background:#fff"></div>
<div class="a" style="left:742px;top:483px;width:630px;height:1px;background:#9c9ca6"></div>
<div class="a" style="left:742px;top:484px;width:631px;height:1px;background:#fff"></div>
<div class="t" style="left:750.6px;top:374.19px;font-size:12.5px;font-weight:bold;color:#111;">Tolerance:</div>
<div class="t" style="left:840.2px;top:374.09px;font-size:12.5px;color:#d82038;letter-spacing:0.13px;">*</div>
<div class="t" style="left:791.6px;top:388.40px;font-size:12.6px;font-weight:bold;color:#111;letter-spacing:0.19px">Early Rescheduled Method:</div>
<div class="t" style="left:1142.4px;top:389.10px;font-size:12.6px;font-weight:bold;color:#111;letter-spacing:0.25px">Late Rescheduled Method:</div>
<div class="t" style="left:758.4px;top:423.95px;font-size:12px;color:#333;letter-spacing:0.13px;">Completion :</div>
<div class="t" style="left:758.4px;top:456.45px;font-size:12px;color:#333;letter-spacing:0.13px;">When Due:</div>
<div class="t" style="left:1107.4px;top:423.75px;font-size:12px;color:#333;letter-spacing:0.13px;">Completion:</div>
<div class="t" style="left:1107.4px;top:456.75px;font-size:12px;color:#333;letter-spacing:0.13px;">When Due:</div>
<div class="a" style="left:859px;top:425px;width:10px;height:10px;background:#fff;box-sizing:border-box;border:1px solid;border-color:#404040 #f4f4f4 #f4f4f4 #404040;box-shadow:inset 1px 1px 0 #909090"></div>
<div class="a" style="left:859px;top:457px;width:10px;height:10px;background:#fff;box-sizing:border-box;border:1px solid;border-color:#404040 #f4f4f4 #f4f4f4 #404040;box-shadow:inset 1px 1px 0 #909090"></div>
<svg class="a" style="left:861px;top:459px" width="7" height="7"><path d="M0.8 3.2 L2.6 5.2 L6.2 1" stroke="#000" stroke-width="1.7" fill="none"/></svg>
<div class="a" style="left:1208px;top:425px;width:10px;height:10px;background:#fff;box-sizing:border-box;border:1px solid;border-color:#404040 #f4f4f4 #f4f4f4 #404040;box-shadow:inset 1px 1px 0 #909090"></div>
<div class="a" style="left:1208px;top:457px;width:10px;height:10px;background:#fff;box-sizing:border-box;border:1px solid;border-color:#404040 #f4f4f4 #f4f4f4 #404040;box-shadow:inset 1px 1px 0 #909090"></div>
<svg class="a" style="left:1210px;top:459px" width="7" height="7"><path d="M0.8 3.2 L2.6 5.2 L6.2 1" stroke="#000" stroke-width="1.7" fill="none"/></svg>
<div class="a" style="left:742px;top:486px;width:631px;height:21px;background:#d4d0c8;box-sizing:border-box;border-bottom:1px solid #404040;border-right:1px solid #808080"></div>
<div class="a" style="left:811px;top:488px;width:62px;height:18px;background:#d4d0c8;box-sizing:border-box;border-top:1px solid #fff;border-left:1px solid #fff;border-right:1px solid #404040;box-shadow:inset -1px 0 0 #808080"></div>
<div class="t" style="left:811px;top:491.63px;font-size:9.2px;color:#222;width:62px;text-align:center;">Special Insp.</div>
<div class="a" style="left:873px;top:488px;width:39px;height:18px;background:#d4d0c8;box-sizing:border-box;border-top:1px solid #fff;border-left:1px solid #fff;border-right:1px solid #404040;box-shadow:inset -1px 0 0 #808080"></div>
<div class="t" style="left:873px;top:491.63px;font-size:9.2px;color:#222;width:39px;text-align:center;">Panels</div>
<div class="a" style="left:912px;top:488px;width:48px;height:18px;background:#d4d0c8;box-sizing:border-box;border-top:1px solid #fff;border-left:1px solid #fff;border-right:1px solid #404040;box-shadow:inset -1px 0 0 #808080"></div>
<div class="t" style="left:912px;top:491.63px;font-size:9.2px;color:#222;width:48px;text-align:center;">Materials</div>
<div class="a" style="left:960px;top:488px;width:33px;height:18px;background:#d4d0c8;box-sizing:border-box;border-top:1px solid #fff;border-left:1px solid #fff;border-right:1px solid #404040;box-shadow:inset -1px 0 0 #808080"></div>
<div class="t" style="left:960px;top:491.63px;font-size:9.2px;color:#222;width:33px;text-align:center;">Tools</div>
<div class="a" style="left:993px;top:488px;width:69px;height:18px;background:#d4d0c8;box-sizing:border-box;border-top:1px solid #fff;border-left:1px solid #fff;border-right:1px solid #404040;box-shadow:inset -1px 0 0 #808080"></div>
<div class="t" style="left:993px;top:491.63px;font-size:9.2px;color:#222;width:69px;text-align:center;">JIC Procedure</div>
<div class="a" style="left:1062px;top:488px;width:41px;height:18px;background:#d4d0c8;box-sizing:border-box;border-top:1px solid #fff;border-left:1px solid #fff;border-right:1px solid #404040;box-shadow:inset -1px 0 0 #808080"></div>
<div class="t" style="left:1062px;top:491.63px;font-size:9.2px;color:#222;width:41px;text-align:center;">Control</div>
<div class="a" style="left:742px;top:487px;width:70px;height:19px;background:#d4d0c8;box-sizing:border-box;border-top:1px solid #fff;border-left:1px solid #fff;border-right:1px solid #404040"></div>
<div class="t" style="left:768px;top:490.34px;font-size:9.4px;color:#222;">Doc. Ref</div>
<svg class="a" style="left:749px;top:489px" width="13" height="13"><rect x="0.5" y="1.5" width="9" height="11" fill="#fffef0" stroke="#d8c080"/><rect x="2.5" y="0" width="5" height="2.5" fill="#8a9aa8"/><path d="M2 5h5M2 7h4M2 9h3" stroke="#c8c8c8"/><path d="M5 10.5 L11.5 2.5" stroke="#e8a828" stroke-width="2.4"/><path d="M4.5 11.5 L5.5 10" stroke="#604010" stroke-width="1"/></svg>
<div class="a" style="left:1301px;top:486px;width:71px;height:19px;background:#ffffc0;box-sizing:border-box;border:1px solid;border-color:#fff #404040 #404040 #fff;box-shadow:inset -1px -1px 0 #808080"></div>
<div class="t" style="left:1301px;top:490.05px;font-size:12px;color:#222;width:71px;text-align:center;letter-spacing:0.13px;">Attach</div>
<div class="a" style="left:742px;top:515px;width:7px;height:1px;background:#9c9ca6"></div>
<div class="a" style="left:742px;top:516px;width:7px;height:1px;background:#fff"></div>
<div class="a" style="left:860px;top:515px;width:512px;height:1px;background:#9c9ca6"></div>
<div class="a" style="left:860px;top:516px;width:512px;height:1px;background:#fff"></div>
<div class="a" style="left:742px;top:515px;width:1px;height:114px;background:#9c9ca6"></div>
<div class="a" style="left:1371px;top:515px;width:1px;height:114px;background:#9c9ca6"></div>
<div class="a" style="left:743px;top:516px;width:1px;height:112px;background:#fff"></div>
<div class="a" style="left:1372px;top:515px;width:1px;height:115px;background:#fff"></div>
<div class="a" style="left:742px;top:628px;width:630px;height:1px;background:#9c9ca6"></div>
<div class="a" style="left:742px;top:629px;width:631px;height:1px;background:#fff"></div>
<div class="t" style="left:750.4px;top:508.79px;font-size:12.5px;font-weight:bold;color:#111;letter-spacing:0.3px">Document Reference:</div>
<div class="a" style="left:1301px;top:510px;width:58px;height:19px;background:#d4d0c8;box-sizing:border-box;border:1px solid;border-color:#fff #404040 #404040 #fff;box-shadow:inset -1px -1px 0 #808080"></div>
<div class="t" style="left:1301px;top:513.25px;font-size:12px;color:#222;width:58px;text-align:center;letter-spacing:0.13px;">Edit</div>
<div class="a" style="left:757px;top:530px;width:603px;height:87px;background:#c0ffff;box-sizing:border-box;border:1px solid;border-color:#404040 #eee #eee #404040;box-shadow:inset 1px 1px 0 #808080"></div>
<div class="t" style="left:759.5px;top:532.75px;font-size:12px;color:#333;letter-spacing:0.27px">No Referenced Documents Were Found !</div>
<div class="a" style="left:742px;top:638px;width:8px;height:1px;background:#9c9ca6"></div>
<div class="a" style="left:851px;top:638px;width:213px;height:1px;background:#9c9ca6"></div>
<div class="a" style="left:743px;top:639px;width:7px;height:1px;background:#fff"></div>
<div class="a" style="left:851px;top:639px;width:213px;height:1px;background:#fff"></div>
<div class="a" style="left:742px;top:638px;width:1px;height:111px;background:#9c9ca6"></div>
<div class="a" style="left:1063px;top:638px;width:1px;height:111px;background:#9c9ca6"></div>
<div class="a" style="left:743px;top:639px;width:1px;height:111px;background:#fff"></div>
<div class="a" style="left:1064px;top:638px;width:1px;height:111px;background:#fff"></div>
<div class="t" style="left:750.4px;top:631.39px;font-size:12.5px;font-weight:bold;color:#111;">Associated Task:</div>
<div class="a" style="left:1066px;top:638px;width:8px;height:1px;background:#9c9ca6"></div>
<div class="a" style="left:1193px;top:638px;width:181px;height:1px;background:#9c9ca6"></div>
<div class="a" style="left:1067px;top:639px;width:7px;height:1px;background:#fff"></div>
<div class="a" style="left:1193px;top:639px;width:181px;height:1px;background:#fff"></div>
<div class="a" style="left:1066px;top:638px;width:1px;height:111px;background:#9c9ca6"></div>
<div class="a" style="left:1373px;top:638px;width:1px;height:111px;background:#9c9ca6"></div>
<div class="a" style="left:1067px;top:639px;width:1px;height:111px;background:#fff"></div>
<div class="a" style="left:1374px;top:638px;width:1px;height:111px;background:#fff"></div>
<div class="t" style="left:1073.8px;top:631.59px;font-size:12.5px;font-weight:bold;color:#111;">Related Task or EC:</div>
<svg class="a" style="left:753px;top:650px" width="11" height="11"><circle cx="5" cy="5.5" r="4.3" fill="#f8f8fc"/><path d="M1.6 8.2 A4.3 4.3 0 0 1 8 2.2" stroke="#505050" stroke-width="1.3" fill="none"/><circle cx="5" cy="5.5" r="1.6" fill="#000"/></svg>
<div class="t" style="left:770px;top:648.55px;font-size:12px;color:#333;letter-spacing:0.13px;">Task</div>
<svg class="a" style="left:809px;top:650px" width="11" height="11"><circle cx="5" cy="5.5" r="4.3" fill="#f8f8fc"/><path d="M1.6 8.2 A4.3 4.3 0 0 1 8 2.2" stroke="#505050" stroke-width="1.3" fill="none"/></svg>
<div class="t" style="left:823.6px;top:648.55px;font-size:12px;color:#333;letter-spacing:0.13px;">EC</div>
<div class="t" style="left:865.2px;top:648.45px;font-size:12px;color:#333;letter-spacing:0.13px;">Filter:</div>
<svg class="a" style="left:1076px;top:650px" width="11" height="11"><circle cx="5" cy="5.5" r="4.3" fill="#f8f8fc"/><path d="M1.6 8.2 A4.3 4.3 0 0 1 8 2.2" stroke="#505050" stroke-width="1.3" fill="none"/><circle cx="5" cy="5.5" r="1.6" fill="#000"/></svg>
<div class="t" style="left:1093px;top:648.55px;font-size:12px;color:#333;letter-spacing:0.13px;">Task</div>
<svg class="a" style="left:1132px;top:650px" width="11" height="11"><circle cx="5" cy="5.5" r="4.3" fill="#f8f8fc"/><path d="M1.6 8.2 A4.3 4.3 0 0 1 8 2.2" stroke="#505050" stroke-width="1.3" fill="none"/></svg>
<div class="t" style="left:1146.6px;top:648.55px;font-size:12px;color:#333;letter-spacing:0.13px;">EC</div>
<div class="t" style="left:1188.2px;top:648.45px;font-size:12px;color:#333;letter-spacing:0.13px;">Filter:</div>
<div class="a" style="left:905px;top:643px;width:72px;height:21px;background:#fff;box-sizing:border-box;border:1px solid;border-color:#404040 #eee #eee #404040;box-shadow:inset 1px 1px 0 #808080"></div>
<div class="a" style="left:1229px;top:643px;width:71px;height:21px;background:#fff;box-sizing:border-box;border:1px solid;border-color:#404040 #eee #eee #404040;box-shadow:inset 1px 1px 0 #808080"></div>
<div class="a" style="left:994px;top:643px;width:57px;height:19px;background:#d4d0c8;box-sizing:border-box;border:1px solid;border-color:#fff #404040 #404040 #fff;box-shadow:inset -1px -1px 0 #808080"></div>
<div class="t" style="left:994px;top:647.25px;font-size:12px;color:#222;width:57px;text-align:center;letter-spacing:0.13px;">Add</div>
<div class="a" style="left:1303px;top:643px;width:57px;height:19px;background:#d4d0c8;box-sizing:border-box;border:1px solid;border-color:#fff #404040 #404040 #fff;box-shadow:inset -1px -1px 0 #808080"></div>
<div class="t" style="left:1303px;top:647.25px;font-size:12px;color:#222;width:57px;text-align:center;letter-spacing:0.13px;">Add</div>
<div class="a" style="left:757px;top:665px;width:294px;height:84px;background:#c0ffff;box-sizing:border-box;border-left:1px solid #404040;border-top:1px solid #808080;border-right:1px solid #eee"></div>
<div class="a" style="left:771px;top:666px;width:279px;height:15px;background:#0a246a"></div>
<div class="a" style="left:760px;top:669px;width:10px;height:10px;background:#fff;border:1px solid #a8a8a8;box-sizing:border-box"></div>
<div class="t" style="left:772px;top:668.31px;font-size:10.3px;color:#fff;letter-spacing:0.24px">No Associated Tasks Were Found !</div>
<div class="a" style="left:1080px;top:665px;width:280px;height:84px;background:#c0ffff;box-sizing:border-box;border-left:1px solid #404040;border-top:1px solid #808080;border-right:1px solid #eee"></div>
<div class="a" style="left:1094px;top:666px;width:265px;height:15px;background:#0a246a"></div>
<div class="a" style="left:1083px;top:669px;width:10px;height:10px;background:#fff;border:1px solid #a8a8a8;box-sizing:border-box"></div>
<div class="t" style="left:1095px;top:668.31px;font-size:10.3px;color:#fff;letter-spacing:0.24px">No Related Tasks or EC Were Found !</div>
<div class="a" style="left:728px;top:748px;width:670px;height:1px;background:#e8e6ea"></div>
<svg class="a" style="left:0;top:0" width="1398" height="749"><path d="M1211.8 460 L1214 460 L1153 590 L1133 586 L1121.5 571 Z" fill="#0c92fc"/><circle cx="1133.8" cy="585.8" r="19.8" fill="#0c92fc" stroke="#fff" stroke-width="1"/><circle cx="1133.8" cy="585.8" r="20.6" fill="none" stroke="#333" stroke-width="1.3"/><text x="1126" y="592.2" font-family="Liberation Serif" font-weight="bold" font-size="14.8" fill="#fff" textLength="16.8" lengthAdjust="spacingAndGlyphs">14</text></svg>
</body></html>
